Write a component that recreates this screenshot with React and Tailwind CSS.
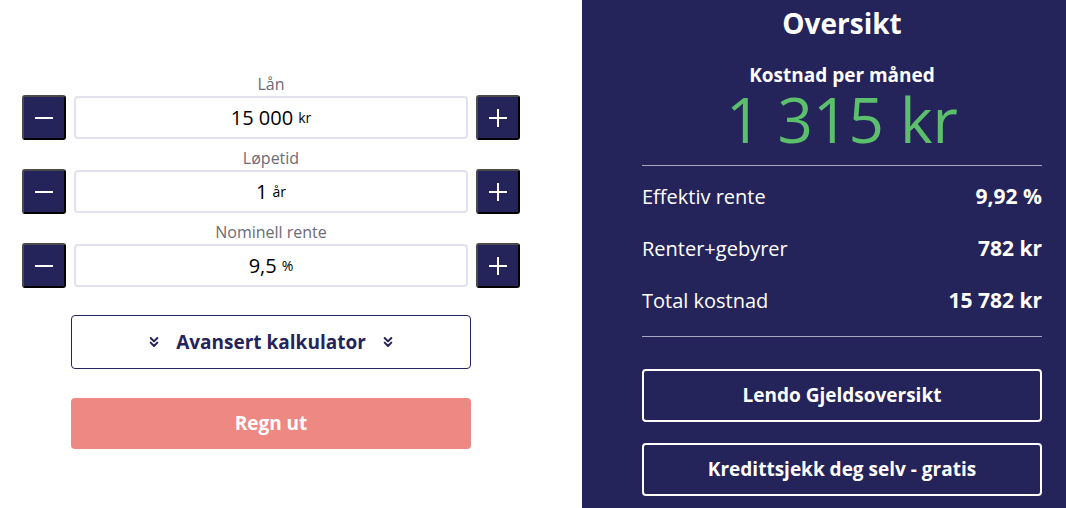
import { ChevronsDown } from "lucide-react";

const fields = [
  { label: "Lån", value: "15 000", unit: "kr" },
  { label: "Løpetid", value: "1", unit: "år" },
  { label: "Nominell rente", value: "9,5", unit: "%" },
];

const rows = [
  { label: "Effektiv rente", value: "9,92 %" },
  { label: "Renter+gebyrer", value: "782 kr" },
  { label: "Total kostnad", value: "15 782 kr" },
];

function StepButton({ children }) {
  return (
    <button className="w-[44px] h-[45px] flex items-center justify-center bg-[#25245a] rounded-[3px] border-2 border-[#4a4a4a] border-r-black border-b-black text-white">
      {children}
    </button>
  );
}

export default function App() {
  return (
    <div className="w-[1066px] h-[508px] flex overflow-hidden bg-white font-['Open_Sans',sans-serif]">
      <div className="w-[582px] pl-[22px] pt-[74px]">
        <div className="w-[498px] flex flex-col">
          {fields.map(f => (
            <div key={f.label} className="flex flex-col">
              <div className="h-[21px] text-center text-[16px] leading-[21px] text-[#6b6b75]">{f.label}</div>
              <div className="flex items-center gap-[8px] h-[45px] mb-[8px]">
                <StepButton>
                  <svg width="20" height="20" viewBox="0 0 20 20"><path d="M1 10h18" stroke="white" strokeWidth="2" /></svg>
                </StepButton>
                <div className="flex-1 h-[43px] border-2 border-[#e2e1ef] rounded-[4px] flex items-center justify-center text-black">
                  <span className="text-[20px]">{f.value}</span>
                  <span className="text-[14px] ml-[5px]">{f.unit}</span>
                </div>
                <StepButton>
                  <svg width="20" height="20" viewBox="0 0 20 20"><path d="M1 10h18M10 1v18" stroke="white" strokeWidth="2" /></svg>
                </StepButton>
              </div>
            </div>
          ))}
        </div>
        <div className="ml-[49px] mt-[19px] w-[400px] flex flex-col gap-[29px]">
          <button className="h-[54px] border border-[#25245a] rounded-[4px] flex items-center justify-center gap-[14px] text-[#25245a] font-bold text-[19px]">
            <ChevronsDown size={16} strokeWidth={3} />
            <span>Avansert kalkulator</span>
            <ChevronsDown size={16} strokeWidth={3} />
          </button>
          <button className="h-[51px] bg-[#ee8883] rounded-[4px] text-white font-bold text-[19px]">Regn ut</button>
        </div>
      </div>
      <div className="flex-1 bg-[#25245a] pl-[60px] text-white">
        <div className="w-[400px] flex flex-col">
          <div className="text-center font-bold text-[28px] leading-[44px] pt-[1px]">Oversikt</div>
          <div className="text-center font-bold text-[19px] leading-[22px] mt-[19px]">Kostnad per måned</div>
          <div className="text-center text-[62px] leading-[62px] mt-[2px] text-[#5cbf6b]">1 315 kr</div>
          <div className="border-t border-[#a9a8c4] mt-[15px]"></div>
          <div className="flex flex-col pt-[5px]">
            {rows.map(r => (
              <div key={r.label} className="flex justify-between h-[52px] items-center text-[20px]">
                <span>{r.label}</span>
                <span className="font-bold text-[21px]">{r.value}</span>
              </div>
            ))}
          </div>
          <div className="border-t border-[#a9a8c4] mt-[9px]"></div>
          <div className="flex flex-col gap-[21px] mt-[32px]">
            <button className="h-[53px] border-2 border-white rounded-[4px] font-bold text-[19px]">Lendo Gjeldsoversikt</button>
            <button className="h-[53px] border-2 border-white rounded-[4px] font-bold text-[19px]">Kredittsjekk deg selv - gratis</button>
          </div>
        </div>
      </div>
    </div>
  );
}
